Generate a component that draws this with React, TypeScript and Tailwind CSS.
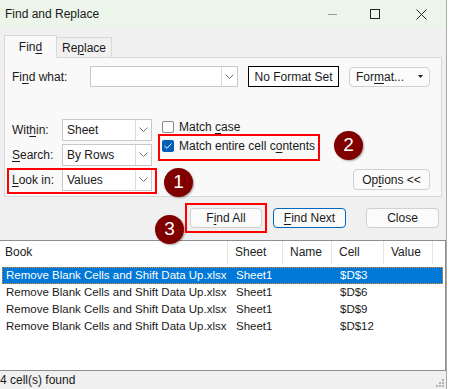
import React from 'react';

const font = { fontFamily: '"Liberation Sans", Arial, sans-serif' };

function U({ children }: { children: React.ReactNode }) {
  return <span className="underline underline-offset-2">{children}</span>;
}

function Chevron() {
  return (
    <svg width="9" height="6" viewBox="0 0 9 6">
      <polyline points="0.5,0.5 4.5,4.5 8.5,0.5" fill="none" stroke="#707070" strokeWidth="1" />
    </svg>
  );
}

function Select({ value }: { value: string }) {
  return (
    <div className="flex h-[22px] w-[90px] items-center border border-[#c8c8c8] bg-white">
      <span className="flex-1 pl-[4px]">{value}</span>
      <span className="flex h-full w-[16px] items-center justify-center border-l border-[#dcdcdc]">
        <Chevron />
      </span>
    </div>
  );
}

function Badge({ n, cls }: { n: string; cls: string }) {
  return (
    <div
      className={`absolute flex h-[29px] w-[29px] items-center justify-center rounded-full bg-[#800000] text-[19px] text-white shadow-[1px_1px_2px_rgba(0,0,0,0.35)] ${cls}`}
    >
      {n}
    </div>
  );
}

const rows = ['$D$3', '$D$6', '$D$9', '$D$12'];

export default function App() {
  return (
    <div className="relative h-[389px] w-[449px] overflow-hidden whitespace-nowrap bg-white text-[12px] text-[#1a1a1a]" style={font}>
      <div className="flex h-full w-[447px] flex-col border-r border-[#a8a8a8] bg-[#f0f0f0]">
        {/* title bar */}
        <div className="flex h-[28px] items-center bg-[#ecf5ea] pl-[5px]">
          <span className="flex-1 text-[12px]">Find and Replace</span>
          <span className="mr-[33px] h-px w-[9px] bg-[#9a9a9a]" />
          <span className="mr-[36px] h-[10px] w-[10px] border border-[#222]" />
          <svg width="11" height="11" viewBox="0 0 11 11" className="mr-[19px]">
            <path d="M0.5 0.5 L10.5 10.5 M10.5 0.5 L0.5 10.5" stroke="#222" strokeWidth="1" />
          </svg>
        </div>

        {/* tabs */}
        <div className="mt-[7px] flex h-[22px] items-end pl-[4px]">
          <div className="z-10 -mb-px flex h-[23px] w-[53px] items-center justify-center border border-b-0 border-[#d9d9d9] bg-[#f9f9f9]">
            Fin<U>d</U>
          </div>
          <div className="flex h-[20px] w-[55px] items-center justify-center border border-b-0 border-l-0 border-[#d9d9d9] bg-[#f0f0f0]">
            Re<U>p</U>lace
          </div>
        </div>

        {/* tab panel */}
        <div className="mx-[4px] flex h-[140px] flex-col border border-[#d9d9d9] bg-[#f9f9f9] pl-[7px]">
          <div className="mt-[8px] flex h-[21px] items-center">
            <span className="w-[78px]">
              Fi<U>n</U>d what:
            </span>
            <div className="flex h-[21px] w-[148px] items-center justify-end border border-[#c8c8c8] bg-white">
              <span className="flex h-full w-[16px] items-center justify-center border-l border-[#dcdcdc]">
                <Chevron />
              </span>
            </div>
            <div className="ml-[10px] flex h-[21px] w-[91px] items-center justify-center border border-black bg-white">
              No Format Set
            </div>
            <div className="ml-[10px] flex h-[20px] w-[81px] items-center justify-end rounded-[4px] border border-[#d0d0d0] bg-[#fbfbfb] pr-[6px]">
              <span className="mr-[14px]">
                For<U>m</U>at...
              </span>
              <svg width="5" height="3" viewBox="0 0 5 3">
                <polygon points="0,0 5,0 2.5,3" fill="#222" />
              </svg>
            </div>
          </div>

          <div className="mt-[32px] flex">
            <div className="flex flex-col gap-[3px]">
              {[
                [<>Wit<U>h</U>in:</>, 'Sheet'],
                [<><U>S</U>earch:</>, 'By Rows'],
                [<><U>L</U>ook in:</>, 'Values'],
              ].map(([l, v], i) => (
                <div key={i} className="flex h-[22px] items-center">
                  <span className="w-[50px]">{l}</span>
                  <Select value={v as string} />
                </div>
              ))}
            </div>
            <div className="ml-[10px] mt-[2px] flex flex-col gap-[7px]">
              <div className="flex h-[12px] items-center gap-[5px]">
                <span className="h-[12px] w-[12px] rounded-[2px] border border-[#8a8a8a] bg-white" />
                <span>
                  Match <U>c</U>ase
                </span>
              </div>
              <div className="flex h-[12px] items-center gap-[5px]">
                <span className="flex h-[12px] w-[12px] items-center justify-center rounded-[2px] bg-[#005fb8]">
                  <svg width="8" height="6" viewBox="0 0 8 6">
                    <polyline points="0.5,3 3,5.3 7.5,0.5" fill="none" stroke="#fff" strokeWidth="1" />
                  </svg>
                </span>
                <span>
                  Match entire cell c<U>o</U>ntents
                </span>
              </div>
            </div>
            <div className="ml-auto mr-[11px] mt-[50px] flex h-[21px] w-[77px] items-center justify-center rounded-[4px] border border-[#d0d0d0] bg-[#fbfbfb]">
              Op<U>t</U>ions &lt;&lt;
            </div>
          </div>
        </div>

        {/* buttons */}
        <div className="mt-[11px] flex h-[20px] pl-[190px]">
          <div className="flex w-[72px] items-center justify-center rounded-[4px] border border-[#d0d0d0] bg-[#fbfbfb]">
            F<U>i</U>nd All
          </div>
          <div className="ml-[11px] flex w-[73px] items-center justify-center rounded-[4px] border border-[#0067c0] bg-[#fbfbfb]">
            <U>F</U>ind Next
          </div>
          <div className="ml-[20px] flex w-[73px] items-center justify-center rounded-[4px] border border-[#d0d0d0] bg-[#fbfbfb]">
            Close
          </div>
        </div>

        {/* results table */}
        <div className="mt-[12px] flex h-[131px] w-[446px] flex-col border-r border-t border-b border-[#8e8e8e] bg-white">
          <div className="flex h-[23px] items-center text-[#222]">
            <span className="h-full w-[228px] border-r border-[#e5e5e5] pl-[5px] leading-[23px]">Book</span>
            <span className="h-full w-[55px] border-r border-[#e5e5e5] pl-[7px] leading-[23px]">Sheet</span>
            <span className="h-full w-[49px] border-r border-[#e5e5e5] pl-[7px] leading-[23px]">Name</span>
            <span className="h-full w-[52px] border-r border-[#e5e5e5] pl-[7px] leading-[23px]">Cell</span>
            <span className="h-full w-[49px] border-r border-[#e5e5e5] pl-[7px] leading-[23px]">Value</span>
          </div>
          <div className="mt-[3px] flex flex-col text-[11.5px]">
            {rows.map((c, i) => (
              <div
                key={c}
                className={`mx-[2px] flex h-[17px] items-center ${
                  i === 0 ? 'border border-dotted border-[#f08a24] bg-[#0078d7] text-white' : 'border border-transparent'
                }`}
              >
                <span className="w-[233px] shrink-0 overflow-hidden pl-[3px]">Remove Blank Cells and Shift Data Up.xlsx</span>
                <span className="w-[104px] shrink-0">Sheet1</span>
                <span>{c}</span>
              </div>
            ))}
          </div>
        </div>

        {/* status bar */}
        <div className="relative flex flex-1 items-center">
          <span>4 cell(s) found</span>
          <svg width="8" height="8" viewBox="0 0 8 8" className="absolute bottom-[2px] right-[2px]">
            {[[6, 0], [3, 3], [6, 3], [0, 6], [3, 6], [6, 6]].map(([x, y], i) => (
              <rect key={i} x={x} y={y} width="2" height="2" fill="#b0b0b0" />
            ))}
          </svg>
        </div>
      </div>

      {/* annotations */}
      <div className="absolute left-[7px] top-[168px] h-[26px] w-[150px] border-2 border-[#ff0000]" />
      <div className="absolute left-[158px] top-[134px] h-[27px] w-[162px] border-2 border-[#ff0000]" />
      <div className="absolute left-[185px] top-[203px] h-[30px] w-[82px] border-2 border-[#ff0000]" />
      <Badge n="1" cls="left-[164px] top-[168px]" />
      <Badge n="2" cls="left-[334px] top-[131px]" />
      <Badge n="3" cls="left-[155px] top-[215px]" />
    </div>
  );
}
